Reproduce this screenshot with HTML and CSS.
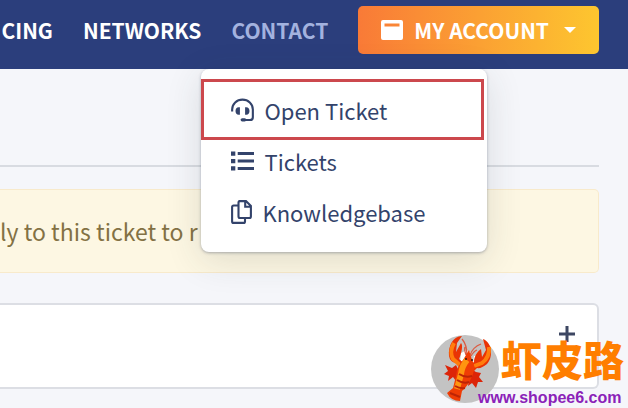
FILE: index.html
```html
<!DOCTYPE html>
<html lang="en">
<head>
<meta charset="utf-8">
<meta name="viewport" content="width=device-width, initial-scale=1">
<title>Support tickets</title>
<link rel="stylesheet" href="styles.css">
</head>
<body>
<header class="topbar">
  <nav class="nav" aria-label="Main">
    <a class="nav-link" href="#">CING</a>
    <a class="nav-link" href="#">NETWORKS</a>
    <div class="nav-group">
      <a class="nav-link nav-link-active" href="#">CONTACT</a>
      <div class="menu">
        <a class="menu-item menu-item-marked" href="#">
          <svg class="menu-icon" viewBox="0 0 24 24" aria-hidden="true"><path d="M1.2 13.5V11.5C1.2 5.5 6 1.2 12 1.2S22.8 5.5 22.8 11.5V19.500Q22.800 22.500 19.800 22.500H13" fill="none" stroke="currentColor" stroke-width="2.200"/><path d="M9.300 9v8H8c-2 0-3.300-1.500-3.300-4S6 9 8 9zM14.700 9v8H16c2 0 3.300-1.500 3.300-4S18 9 16 9z" fill="currentColor"/><rect x="10" y="20.500" width="6" height="3.500" rx="1.700" fill="currentColor"/></svg>
          <span>Open Ticket</span>
        </a>
        <a class="menu-item" href="#">
          <svg class="menu-icon" viewBox="0 0 24 24" aria-hidden="true"><path d="M0 2h4.500v4.500H0zM0 9.800h4.500v4.500H0zM0 17.500h4.500V22H0zM7 2.500h17v3.200H7zM7 10.400h17v3.200H7zM7 18.200h17v3.200H7z" fill="currentColor"/></svg>
          <span>Tickets</span>
        </a>
        <a class="menu-item" href="#">
          <svg class="menu-icon menu-icon-files" viewBox="0 0 21 24" aria-hidden="true"><path d="M7.500 1.100H15L19.900 6V16.500Q19.900 18 18.400 18H9Q7.500 18 7.500 16.500V2.600Q7.500 1.100 9 1.100M14.200 1.500V6.800H19.500M7.500 5.500H2.600Q1.100 5.500 1.100 7V21.400Q1.100 22.900 2.600 22.900H12.500Q14 22.900 14 21.400V18" fill="none" stroke="currentColor" stroke-width="2.100"/></svg>
          <span>Knowledgebase</span>
        </a>
      </div>
    </div>
    <button class="account" type="button">
      <svg class="account-icon" viewBox="0 0 22 20" aria-hidden="true"><path fill="currentColor" fill-rule="evenodd" d="M2 0H20Q22 0 22 2V18Q22 20 20 20H2Q0 20 0 18V2Q0 0 2 0ZM3.500 3.500V6.500H18.500V3.500Z"/></svg>
      <span>MY ACCOUNT</span>
      <svg class="caret" viewBox="0 0 12 6" aria-hidden="true"><path fill="currentColor" d="M0 0H12L6 6Z"/></svg>
    </button>
  </nav>
</header>
<main class="content">
  <hr class="rule">
  <p class="notice">ly to this ticket to r</p>
  <section class="panel">
    <button class="expand" type="button" aria-label="Expand">
      <svg class="plus" viewBox="0 0 16 16" aria-hidden="true"><path d="M8 0V16M0 8H16" stroke="currentColor" stroke-width="3"/></svg>
    </button>
  </section>
</main>
<aside class="brand">
  <svg class="brand-logo" viewBox="0 0 68 68" aria-hidden="true">
    <circle cx="34" cy="34" r="34" fill="#c3c3c3"/>
    <path d="M30 18l6-3 4 3-4 9-7 0zM43 21l5-1-3 9-3-2z" fill="#fff"/>
    <path d="M14 30l7 3 4-3 4 8-4 8-3-4-5 4 1-5-5-2 4-3zM40 34l5 3 5 1-2 4 4 5-5 0-2 6-4-5-4 3z" fill="#dc2408"/>
    <path d="M36 20Q36 10 31 4M39 20Q42 12 50 9M40 21Q43 16 46 15M35 20Q33 14 34 12" fill="none" stroke="#dc5c42" stroke-width="1.300"/>
    <path d="M31 1C22 1 17 11 18 21Q19 27 25 28L30 35 35 30 28 24C31 17 32 10 30 8L25 17 26 8Z" fill="#e93305"/>
    <path d="M52 4C62 8 62 23 56 29Q50 34 46 33L41 38 37 33 43 27C43 21 47 16 50 14L51 22 55 15Z" fill="#e93305"/>
    <path d="M23 8Q18 17 22 24L29 30M58 12Q59 22 51 28L43 31" fill="none" stroke="#ff7d0d" stroke-width="4"/>
    <path d="M38 15L32 25Q26 31 25 41L22 53 16 58Q20 66 29 66L31 56Q38 50 42 39Q45 31 41 25Z" fill="#ef3c05"/>
    <path d="M36 25Q31 31 30 39L26 54" fill="none" stroke="#ff9510" stroke-width="6"/>
    <path d="M28 39Q34 43 41 41M26 45Q32 49 38 47M24 51Q29 54 34 53M19 58L29 62" fill="none" stroke="#bd2406" stroke-width="2"/>
    <circle cx="35" cy="24" r="1" fill="#391307"/><circle cx="41" cy="25" r="1" fill="#391307"/>
  </svg>
  <div class="brand-name" lang="zh-CN">虾皮路</div>
  <a class="brand-url" href="#">www.shopee6.com</a>
</aside>
</body>
</html>
```
FILE: styles.css
```css
* {
  box-sizing: border-box;
}

body {
  margin: 0;
  min-height: 100vh;
  overflow: hidden;
  background: #f5f6fa;
  color: #33436b;
  font-family: "Noto Sans CJK SC", "Open Sans", sans-serif;
  font-size: 23px;
  line-height: 32px;
}

a {
  color: inherit;
  text-decoration: none;
}

button {
  border: 0;
  font: inherit;
}

svg {
  flex-shrink: 0;
}

.topbar {
  padding: 6px 29px 15px 0;
  background: #2b3e7c;
}

.nav {
  display: flex;
  justify-content: flex-end;
  align-items: center;
  gap: 30px;
  font-size: 21px;
  font-weight: 700;
  color: #fff;
  white-space: nowrap;
}

.nav-group {
  position: relative;
}

.nav-link-active {
  color: #a3b2df;
}

.account {
  display: flex;
  flex-shrink: 0;
  align-items: center;
  gap: 11px;
  height: 48px;
  padding: 0 23px;
  border-radius: 5px;
  background: linear-gradient(90deg, #f97a37, #fdc62f);
  color: #fff;
}

.account-icon {
  width: 22px;
  height: 20px;
}

.caret {
  width: 12px;
  height: 6px;
  margin-left: 4px;
}

.menu {
  position: absolute;
  top: 55px;
  left: -30px;
  z-index: 2;
  width: 286px;
  padding: 15px 8px 15px 5px;
  border-radius: 8px;
  background: #fff;
  box-shadow: 0 1px 3px rgba(40, 50, 80, 0.35), 0 8px 36px rgba(40, 60, 60, 0.14);
  color: #33436b;
  font-size: 22px;
  font-weight: 400;
}

.menu-item {
  display: flex;
  align-items: center;
  gap: 10px;
  height: 51px;
  padding-left: 25px;
}

.menu-item-marked {
  outline: 3px solid #cc484d;
  outline-offset: 2px;
}

.menu-icon {
  width: 23px;
  height: 24px;
}

.menu-icon-files {
  width: 21px;
}

.content {
  padding-right: 29px;
}

.rule {
  margin: 96px 0 22px;
  border: 0;
  border-top: 2px solid #d8dbe1;
}

.notice {
  margin: 0 0 30px;
  padding: 25px 0;
  border: 1px solid #f8eacb;
  border-left: 0;
  border-radius: 0 5px 5px 0;
  background: #fdf7e3;
  color: #837144;
}

.panel {
  display: flex;
  justify-content: flex-end;
  padding: 14px 22px 38px;
  border: 2px solid #dcdee4;
  border-left: 0;
  border-radius: 0 6px 6px 0;
  background: #fff;
}

.expand {
  display: flex;
  padding: 7px 0;
  background: none;
  color: #3d4762;
}

.plus {
  width: 16px;
  height: 16px;
}

.brand {
  position: absolute;
  right: 2px;
  bottom: 0;
  z-index: 3;
  display: grid;
  grid-template-columns: 47px 23px 125px;
  grid-template-rows: 52px 21px;
}

.brand-logo {
  grid-area: 1 / 1 / 3 / 3;
  width: 68px;
  height: 68px;
}

.brand-name {
  grid-area: 1 / 3;
  color: #ff7e00;
  font-size: 41px;
  font-weight: 900;
  line-height: 46px;
}

.brand-url {
  grid-area: 2 / 2 / 3 / 4;
  color: #8b22b8;
  font-family: "Liberation Sans", sans-serif;
  font-size: 16px;
  font-weight: 700;
  line-height: 21px;
}
```
